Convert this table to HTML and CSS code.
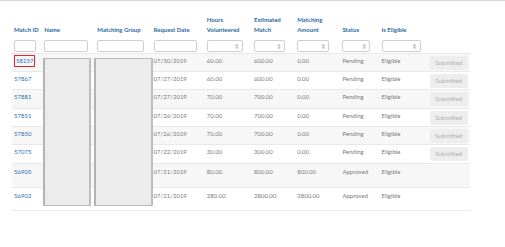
FILE: index.html
```html
<!DOCTYPE html>
<html>
<head>
<meta charset="utf-8">
<link rel="stylesheet" href="styles.css">
</head>
<body>
<div class="topline"></div>
<div class="wrap">
  <table class="grid">
    <colgroup>
      <col class="c-id"><col class="c-name"><col class="c-group"><col class="c-date"><col class="c-hours"><col class="c-est"><col class="c-amt"><col class="c-status"><col class="c-elig"><col class="c-btn">
    </colgroup>
    <thead>
      <tr class="head">
        <th>Match ID</th><th>Name</th><th>Matching Group</th><th>Request Date</th><th>Hours<br>Volunteered</th><th>Estimated<br>Match</th><th>Matching<br>Amount</th><th>Status</th><th>Is Eligible</th><th></th>
      </tr>
      <tr class="filters">
        <td><div class="inp w-id"></div></td>
        <td><div class="inp w-name"></div></td>
        <td><div class="inp w-group"></div></td>
        <td><div class="inp w-date"></div></td>
        <td><div class="inp sel w-hours"><span class="arr">&#8597;</span></div></td>
        <td><div class="inp sel w-est"><span class="arr">&#8597;</span></div></td>
        <td><div class="inp sel w-amt"><span class="arr">&#8597;</span></div></td>
        <td><div class="inp sel w-status"><span class="arr">&#8597;</span></div></td>
        <td><div class="inp sel w-elig"><span class="arr">&#8597;</span></div></td>
        <td></td>
      </tr>
    </thead>
    <tbody>
      <tr class="r s h1"><td><a class="id flag">58157</a></td><td></td><td></td><td>07/30/2019</td><td>60.00</td><td>600.00</td><td>0.00</td><td>Pending</td><td>Eligible</td><td class="bc"><span class="btn">Submitted</span></td></tr>
      <tr class="r h1"><td><a class="id">57867</a></td><td></td><td></td><td>07/27/2019</td><td>60.00</td><td>600.00</td><td>0.00</td><td>Pending</td><td>Eligible</td><td class="bc"><span class="btn">Submitted</span></td></tr>
      <tr class="r s h2"><td><a class="id">57881</a></td><td></td><td></td><td>07/27/2019</td><td>70.00</td><td>700.00</td><td>0.00</td><td>Pending</td><td>Eligible</td><td class="bc"><span class="btn">Submitted</span></td></tr>
      <tr class="r h1"><td><a class="id">57851</a></td><td></td><td></td><td>07/26/2019</td><td>70.00</td><td>700.00</td><td>0.00</td><td>Pending</td><td>Eligible</td><td class="bc"><span class="btn">Submitted</span></td></tr>
      <tr class="r s h1"><td><a class="id">57850</a></td><td></td><td></td><td>07/26/2019</td><td>70.00</td><td>700.00</td><td>0.00</td><td>Pending</td><td>Eligible</td><td class="bc"><span class="btn">Submitted</span></td></tr>
      <tr class="r h2"><td><a class="id">57075</a></td><td></td><td></td><td>07/22/2019</td><td>30.00</td><td>300.00</td><td>0.00</td><td>Pending</td><td>Eligible</td><td class="bc"><span class="btn">Submitted</span></td></tr>
      <tr class="r s h3"><td><a class="id">56905</a></td><td></td><td></td><td>07/21/2019</td><td>80.00</td><td>800.00</td><td>800.00</td><td>Approved</td><td>Eligible</td><td></td></tr>
      <tr class="r h4 last"><td><a class="id">56902</a></td><td></td><td></td><td>07/21/2019</td><td>280.00</td><td>2800.00</td><td>2800.00</td><td>Approved</td><td>Eligible</td><td></td></tr>
    </tbody>
  </table>
  <div class="redact redact-name"></div>
  <div class="redact redact-group"></div>
</div>
</body>
</html>
```

FILE: styles.css
```css
html, body {
  margin: 0;
  padding: 0;
  background: #fff;
}
body {
  font-family: Lato, "Open Sans", sans-serif;
  font-size: 6px;
  color: #777;
}
.topline {
  height: 1px;
  background: #d4d4d4;
}
.wrap {
  position: relative;
  padding: 9px 0 0 12px;
}
.grid {
  border-collapse: collapse;
  table-layout: fixed;
  width: 458px;
}
.c-id { width: 30px; }
.c-name { width: 53px; }
.c-group { width: 56px; }
.c-date { width: 53px; }
.c-hours { width: 47px; }
.c-est { width: 43px; }
.c-amt { width: 45px; }
.c-status { width: 39px; }
.c-elig { width: 50px; }
.c-btn { width: 40px; }

.grid th, .grid td {
  padding: 0 0 0 2px;
  text-align: left;
  white-space: nowrap;
}
.head th {
  height: 25px;
  vertical-align: bottom;
  padding-bottom: 1px;
  font-weight: 700;
  color: #2b6aa6;
  line-height: 10px;
  font-size: 6px;
}
.filters td {
  height: 12px;
  padding-top: 4px;
  padding-bottom: 1px;
  vertical-align: top;
}
.inp {
  box-sizing: border-box;
  height: 12px;
  border: 1px solid #cfcfcf;
  border-radius: 2px;
  background: #fff;
  position: relative;
}
.sel .arr {
  position: absolute;
  right: 3px;
  top: 2px;
  font-size: 5px;
  line-height: 7px;
  color: #777;
}
.w-id { width: 22px; }
.w-name { width: 44px; }
.w-group { width: 47px; }
.w-date { width: 43px; }
.w-hours { width: 36px; }
.w-est { width: 31px; }
.w-amt { width: 32px; }
.w-status { width: 28px; }
.w-elig { width: 39px; }

.r td {
  vertical-align: top;
  padding-top: 2px;
  line-height: 10px;
  border-top: 1px solid #e9e9e9;
  color: #7a7a7a;
}
.r td.bc { padding-left: 0; }
.r.s td { background: #f7f7f7; }
.r.last td { border-bottom: 1px solid #e9e9e9; }
.h1 td { height: 15px; }
.h2 td { height: 16px; }
.h3 td { height: 20px; padding-top: 3px; }
.h4 td { height: 19px; padding-top: 3px; }

.id {
  color: #2e6db0;
  text-decoration: none;
}
.flag {
  display: inline-block;
  padding: 0 1px;
  line-height: 10px;
  border: 1px solid #e2262b;
  margin-top: -1px;
}
.btn {
  display: block;
  box-sizing: border-box;
  width: 38px;
  height: 14px;
  border-radius: 2px;
  background: #ededed;
  color: #b0b0b0;
  text-align: center;
  line-height: 14px;
}
.redact {
  position: absolute;
  top: 57px;
  height: 148px;
  box-sizing: border-box;
  background: #ececec;
  border: 1px solid #b9b9b9;
  border-left: 2px solid #b3b3b3;
  border-right: 2px solid #bdbdbd;
  border-radius: 1px;
}
.redact-name { left: 43px; width: 48px; }
.redact-group { left: 94px; width: 59px; }
```
